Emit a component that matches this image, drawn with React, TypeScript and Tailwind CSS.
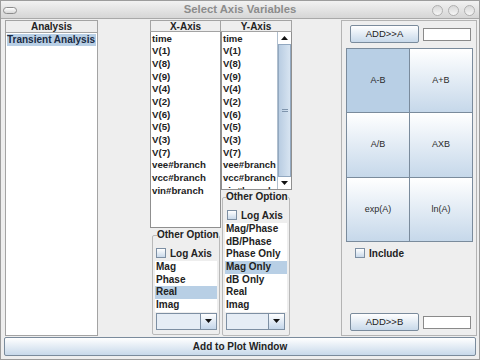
import React from "react";

const xVars = ["time", "V(1)", "V(8)", "V(9)", "V(4)", "V(2)", "V(6)", "V(5)", "V(3)", "V(7)", "vee#branch", "vcc#branch", "vin#branch"];
const xOpts = ["Mag", "Phase", "Real", "Imag"];
const yOpts = ["Mag/Phase", "dB/Phase", "Phase Only", "Mag Only", "dB Only", "Real", "Imag"];

function CheckBox({ label, className = "" }: { label: string; className?: string }) {
  return (
    <div className={`flex items-center h-[12px] ${className}`}>
      <div className="w-[10px] h-[10px] border border-[#7d8fa3] bg-gradient-to-b from-white to-[#c9d9ea]" />
      <span className="ml-[4px] text-[10px] font-bold text-[#222]">{label}</span>
    </div>
  );
}

function Combo({ className = "" }: { className?: string }) {
  return (
    <div className={`flex h-[17px] border border-[#7d8fa3] bg-[#e6edf5] ${className}`}>
      <div className="flex-1" />
      <div className="w-[16px] border-l border-[#7d8fa3] bg-gradient-to-b from-white to-[#c4d6ea] flex items-center justify-center">
        <svg width="7" height="4" viewBox="0 0 7 4">
          <path d="M0 0 H7 L3.5 4 Z" fill="#111" />
        </svg>
      </div>
    </div>
  );
}

function OptionList({ items, selected }: { items: string[]; selected: string }) {
  return (
    <div className="bg-white">
      {items.map((it) => (
        <div
          key={it}
          className={`h-[12.7px] leading-[12.7px] pl-[1px] text-[10px] font-bold text-[#222] ${it === selected ? "bg-[#b8cfe5]" : ""}`}
        >
          {it}
        </div>
      ))}
    </div>
  );
}

function GridButton({ label, active }: { label: string; active?: boolean }) {
  return (
    <div
      className={`flex items-center justify-center border-[#7a8b9c] border-r border-b text-[9px] text-[#2a2a2a] ${
        active ? "bg-[#b8cfe5]" : "bg-gradient-to-b from-white to-[#c6d8ea]"
      }`}
    >
      {label}
    </div>
  );
}

function AddRow({ label, className = "" }: { label: string; className?: string }) {
  return (
    <div className={`flex items-center ${className}`}>
      <div className="ml-[8px] w-[69px] h-[18px] border border-[#7a8b9c] rounded-[2px] bg-gradient-to-b from-white to-[#c8d9ea] flex items-center justify-center text-[9.5px] text-[#222]">
        {label}
      </div>
      <div className="ml-[4px] w-[48px] h-[13px] border border-[#8a8a8a] bg-white" />
    </div>
  );
}

export default function App() {
  return (
    <div className="w-[480px] h-[360px] overflow-hidden bg-[#eeeeee] border border-[#9c9c9c] flex flex-col font-['Liberation_Sans',Arial,sans-serif]">
      {/* title bar */}
      <div className="relative h-[18px] shrink-0 bg-gradient-to-b from-[#f2f2f2] to-[#d6d6d6] border-b border-[#a9a9a9] flex items-center justify-center">
        <div className="absolute left-[2px] top-[6px] w-[14px] h-[7px] rounded-full border border-[#8c8c8c] bg-gradient-to-b from-white to-[#d8d8d8]" />
        <span className="text-[11.3px] font-bold text-[#8c8c8c]">Select Axis Variables</span>
        <div className="absolute right-[4px] top-[4px] flex gap-[5px]">
          {[0, 1, 2].map((i) => (
            <div key={i} className="w-[11px] h-[11px] rounded-full border border-[#b0b0b0] bg-gradient-to-b from-[#d8d8d8] to-[#f6f6f6]" />
          ))}
        </div>
      </div>

      {/* main area */}
      <div className="flex h-[317px] shrink-0 pt-[1px]">
        {/* Analysis */}
        <div className="ml-[4px] w-[93px] flex flex-col border border-[#a3a3a3]">
          <div className="h-[12px] leading-[12px] bg-[#eeeeee] border-b border-[#a3a3a3] text-center text-[10px] font-bold text-[#222]">
            Analysis
          </div>
          <div className="flex-1 bg-white pt-[1px] px-[1px]">
            <div className="h-[12px] leading-[12px] bg-[#b8cfe5] text-[10px] font-bold text-[#1a2b44]">Transient Analysis</div>
          </div>
        </div>

        {/* X axis */}
        <div className="ml-[52px] w-[71px] flex flex-col">
          <div className="h-[12px] leading-[12px] bg-[#eeeeee] border border-[#a3a3a3] text-center text-[10px] font-bold text-[#222]">
            X-Axis
          </div>
          <div className="h-[196px] bg-white border-x border-b border-[#8f8f8f] pt-[0.5px] overflow-hidden">
            {xVars.map((v) => (
              <div key={v} className="h-[12.7px] leading-[12.7px] pl-[1px] text-[9.7px] font-bold text-[#222]">
                {v}
              </div>
            ))}
          </div>
          <fieldset className="mt-[1px] ml-[2px] mr-[1px] h-[106px] border border-[#b9b9b9] rounded-[2px] min-w-0">
            <legend className="ml-[4px] text-[10px] font-bold text-[#222] leading-[12px]">Other Option</legend>
            <CheckBox label="Log Axis" className="mt-[6px] ml-[3px]" />
            <div className="mt-[2px] mx-[2px]">
              <OptionList items={xOpts} selected="Real" />
            </div>
            <Combo className="mt-[1px] ml-[3px] mr-[2px]" />
          </fieldset>
        </div>

        {/* Y axis */}
        <div className="w-[71px] flex flex-col">
          <div className="h-[12px] leading-[12px] bg-[#eeeeee] border-y border-r border-[#a3a3a3] text-center text-[10px] font-bold text-[#222]">
            Y-Axis
          </div>
          <div className="h-[158px] flex bg-white border-x border-b border-[#8f8f8f] overflow-hidden">
            <div className="flex-1 pt-[0.5px] overflow-hidden">
              {xVars.map((v) => (
                <div key={v} className="h-[12.7px] leading-[12.7px] pl-[1px] text-[9.5px] font-bold text-[#222] whitespace-nowrap">
                  {v}
                </div>
              ))}
            </div>
            <div className="w-[14px] flex flex-col bg-[#eef3f8] border-l border-[#b0bfce]">
              <div className="h-[12px] flex items-center justify-center bg-white">
                <svg width="7" height="4" viewBox="0 0 7 4">
                  <path d="M0 4 H7 L3.5 0 Z" fill="#111" />
                </svg>
              </div>
              <div className="flex-1 bg-gradient-to-r from-[#b9cde2] to-[#d7e4f1] border border-[#92a8c0] flex items-center justify-center">
                <div className="w-[6px] h-[3px] border-y border-[#7f95ad]" />
              </div>
              <div className="h-[12px] flex items-center justify-center bg-white">
                <svg width="7" height="4" viewBox="0 0 7 4">
                  <path d="M0 0 H7 L3.5 4 Z" fill="#111" />
                </svg>
              </div>
            </div>
          </div>
          <fieldset className="mt-[1px] ml-[1px] mr-[2px] h-[145px] border border-[#b9b9b9] rounded-[2px] min-w-0">
            <legend className="ml-[3px] text-[10px] font-bold text-[#222] leading-[12px] whitespace-nowrap">Other Option</legend>
            <CheckBox label="Log Axis" className="mt-[6px] ml-[4px]" />
            <div className="mt-[2px] mx-[2px]">
              <OptionList items={yOpts} selected="Mag Only" />
            </div>
            <Combo className="mt-[1px] ml-[3px] mr-[4px]" />
          </fieldset>
        </div>

        {/* Right panel */}
        <div className="ml-[49px] w-[136px] flex flex-col border border-[#b3b3b3]">
          <AddRow label="ADD>>A" className="mt-[4px]" />
          <div className="mt-[5px] ml-[4px] w-[127px] h-[194px] grid grid-cols-2 grid-rows-3 border-l border-t border-[#7a8b9c]">
            <GridButton label="A-B" active />
            <GridButton label="A+B" />
            <GridButton label="A/B" />
            <GridButton label="AXB" />
            <GridButton label="exp(A)" />
            <GridButton label="ln(A)" />
          </div>
          <CheckBox label="Include" className="mt-[5px] ml-[13px]" />
          <div className="flex-1" />
          <AddRow label="ADD>>B" className="mb-[4px]" />
        </div>
      </div>

      {/* bottom button */}
      <div className="mt-[1px] mx-[3px] h-[19px] border border-[#7a8b9c] rounded-[2px] bg-gradient-to-b from-white to-[#c8d9ea] flex items-center justify-center text-[10px] font-bold text-[#222]">
        Add to Plot Window
      </div>
    </div>
  );
}
